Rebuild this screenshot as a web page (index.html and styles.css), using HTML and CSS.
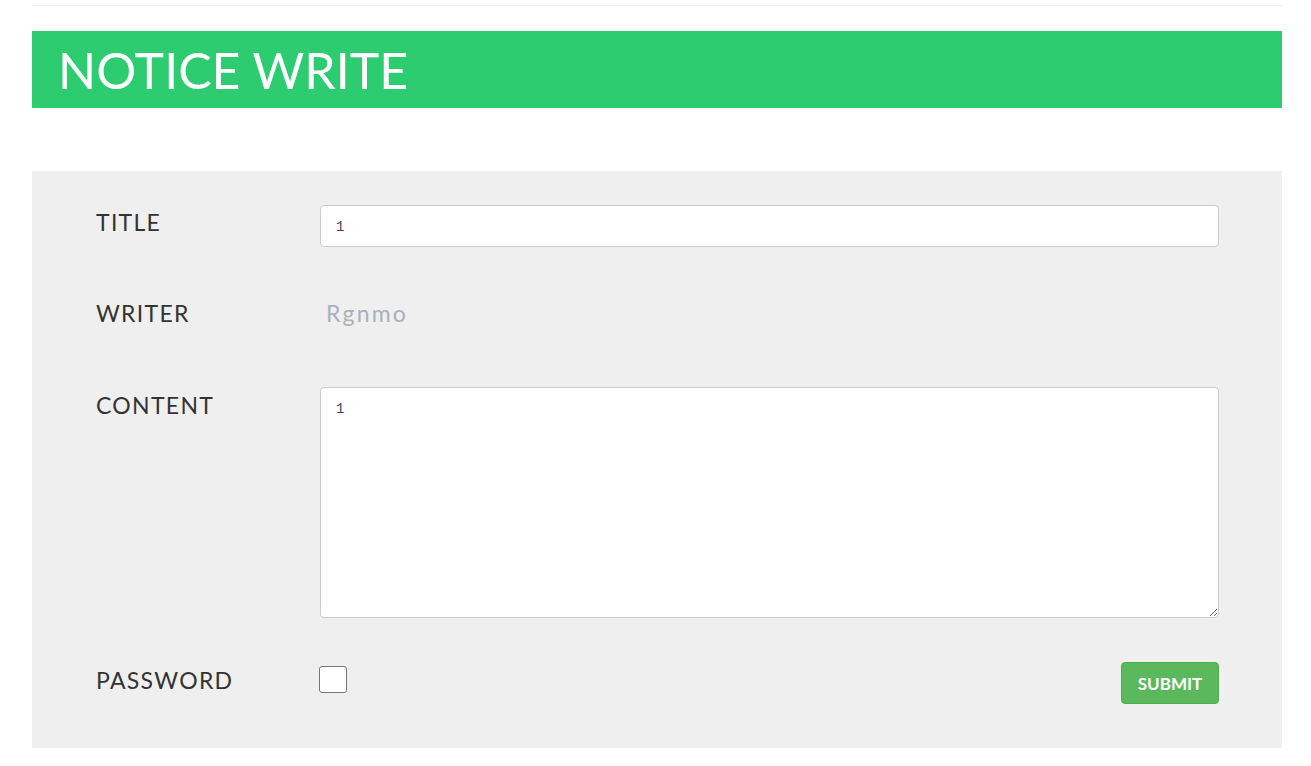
FILE: index.html
```html
<!DOCTYPE html>
<html>
<head>
<meta charset="utf-8">
<link rel="stylesheet" href="styles.css">
</head>
<body>
<div class="page">
  <hr class="topline">
  <div class="banner"><h1>NOTICE WRITE</h1></div>
  <form class="panel">
    <div class="row row-title">
      <label class="lbl">TITLE</label>
      <input class="field" type="text" value="1">
    </div>
    <div class="row row-writer">
      <label class="lbl">WRITER</label>
      <span class="static">Rgnmo</span>
    </div>
    <div class="row row-content">
      <label class="lbl">CONTENT</label>
      <textarea class="field area">1</textarea>
    </div>
    <div class="row row-pass">
      <label class="lbl">PASSWORD</label>
      <span class="check"></span>
      <button class="submit" type="button">SUBMIT</button>
    </div>
  </form>
</div>
</body>
</html>
```
FILE: styles.css
```css
html, body { margin: 0; padding: 0; background: #fff; }
body { font-family: Lato, "Open Sans", sans-serif; color: #333; }
.page { padding: 0 29px 0 32px; }
.topline { margin: 5px 0 0 0; border: 0; border-top: 1px solid #eee; height: 0; }
.banner { margin-top: 25px; height: 77px; background: #2ecc71; display: flex; align-items: center; padding-left: 26px; }
.banner h1 { margin: 0; color: #fff; font-weight: 400; font-size: 50px; letter-spacing: 0; line-height: 1; }
.panel { margin-top: 63px; background: #efefef; padding: 34px 63px 44px 64px; display: flex; flex-direction: column; }
.row { display: flex; align-items: flex-start; }
.lbl { width: 224px; flex: none; font-size: 23px; line-height: 28px; padding-top: 3px; color: #333; letter-spacing: 1.3px; font-weight: 400; }
.field { flex: 1; box-sizing: border-box; height: 42px; border: 1px solid #ccc; border-radius: 4px; background: #fff; font-family: "Liberation Mono", monospace; font-size: 14px; color: #4a3f5c; padding: 7px 15px 6px; margin: 0; outline: none; }
.row-writer { margin-top: 45px; height: 50px; }
.row-writer .lbl { padding-top: 7px; }
.static { font-size: 23px; line-height: 28px; padding-top: 7px; padding-left: 6px; color: #a9b1bb; letter-spacing: 2.2px; font-weight: 400; }
.row-content { margin-top: 45px; }
.row-content .lbl { padding-top: 4px; }
.area { height: 231px; resize: vertical; padding-top: 13px; }
.row-pass { margin-top: 44px; }
.row-pass .lbl { padding-top: 4px; }
.check { width: 28px; height: 27px; margin-top: 4px; margin-left: -1px; box-sizing: border-box; border: 1px solid #767676; border-radius: 3px; background: #fff; }
.submit { margin-left: auto; width: 98px; height: 42px; background: #5cb85c; border: 1px solid #4cae4c; border-radius: 4px; color: #fff; font-family: Lato, sans-serif; font-weight: 700; font-size: 17px; letter-spacing: 0; padding: 0; }
```
